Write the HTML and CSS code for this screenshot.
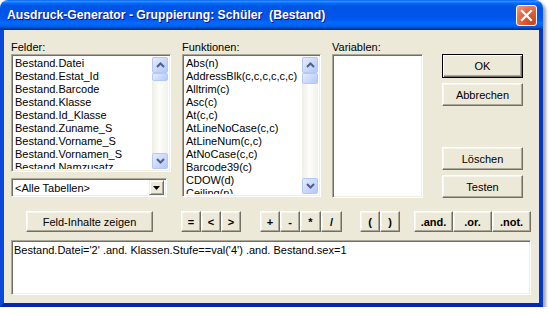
FILE: index.html
```html
<!DOCTYPE HTML>
<html>
<head>
  <title>Ausdruck-Generator</title>
  <meta charset="UTF-8">
  <link rel="stylesheet" href="styles.css">
</head>
<body>
  <div class="window">
    <div class="titlebar">
      <span class="title">Ausdruck-Generator - Gruppierung: Schüler&nbsp; (Bestand)</span>
      <span class="close">
        <svg width="13" height="13" viewBox="0 0 13 13"><path d="M2 2 L11 11 M11 2 L2 11" stroke="#fff" stroke-width="2.2" stroke-linecap="square"/></svg>
      </span>
    </div>

    <div class="client">
      <div class="top">
        <div class="col col-felder">
          <div class="label">Felder:</div>
          <div class="listbox sunken felder-list">
            <ul class="items">
              <li>Bestand.Datei</li>
              <li>Bestand.Estat_Id</li>
              <li>Bestand.Barcode</li>
              <li>Bestand.Klasse</li>
              <li>Bestand.Id_Klasse</li>
              <li>Bestand.Zuname_S</li>
              <li>Bestand.Vorname_S</li>
              <li>Bestand.Vornamen_S</li>
              <li>Bestand.Namzusatz</li>
            </ul>
            <div class="vscroll">
              <span class="sb-btn"><svg width="9" height="6" viewBox="0 0 9 6"><path d="M1 5 L4.5 1.5 L8 5" fill="none" stroke="#4d6185" stroke-width="2"/></svg></span>
              <span class="sb-thumb thumb-small"></span>
              <span class="sb-btn sb-down"><svg width="9" height="6" viewBox="0 0 9 6"><path d="M1 1 L4.5 4.5 L8 1" fill="none" stroke="#4d6185" stroke-width="2"/></svg></span>
            </div>
          </div>
          <div class="combo sunken">
            <span class="combo-text">&lt;Alle Tabellen&gt;</span>
            <span class="combo-btn"><svg width="7" height="4" viewBox="0 0 7 4"><path d="M0 0 H7 L3.5 4 Z" fill="#000"/></svg></span>
          </div>
        </div>

        <div class="col col-funk">
          <div class="label">Funktionen:</div>
          <div class="listbox sunken funk-list">
            <ul class="items">
              <li>Abs(n)</li>
              <li>AddressBlk(c,c,c,c,c,c)</li>
              <li>Alltrim(c)</li>
              <li>Asc(c)</li>
              <li>At(c,c)</li>
              <li>AtLineNoCase(c,c)</li>
              <li>AtLineNum(c,c)</li>
              <li>AtNoCase(c,c)</li>
              <li>Barcode39(c)</li>
              <li>CDOW(d)</li>
              <li>Ceiling(n)</li>
            </ul>
            <div class="vscroll">
              <span class="sb-btn"><svg width="9" height="6" viewBox="0 0 9 6"><path d="M1 5 L4.5 1.5 L8 5" fill="none" stroke="#4d6185" stroke-width="2"/></svg></span>
              <span class="sb-thumb thumb-mid"></span>
              <span class="sb-btn sb-down"><svg width="9" height="6" viewBox="0 0 9 6"><path d="M1 1 L4.5 4.5 L8 1" fill="none" stroke="#4d6185" stroke-width="2"/></svg></span>
            </div>
          </div>
        </div>

        <div class="col col-var">
          <div class="label">Variablen:</div>
          <div class="listbox sunken var-list"></div>
        </div>

        <div class="col col-buttons">
          <button class="btn btn-default">OK</button>
          <button class="btn">Abbrechen</button>
          <button class="btn btn-push">Löschen</button>
          <button class="btn">Testen</button>
        </div>
      </div>

      <div class="ops">
        <button class="btn btn-feld">Feld-Inhalte zeigen</button>
        <div class="group g-cmp">
          <button class="btn op">=</button><button class="btn op">&lt;</button><button class="btn op">&gt;</button>
        </div>
        <div class="group g-math">
          <button class="btn op">+</button><button class="btn op">-</button><button class="btn op w21">*</button><button class="btn op w21">/</button>
        </div>
        <div class="group g-par">
          <button class="btn op">(</button><button class="btn op">)</button>
        </div>
        <div class="group g-log">
          <button class="btn op wide">.and.</button><button class="btn op wide">.or.</button><button class="btn op wide">.not.</button>
        </div>
      </div>

      <div class="expr sunken">Bestand.Datei='2' .and. Klassen.Stufe==val('4') .and. Bestand.sex=1</div>
    </div>
  </div>
</body>
</html>
```

FILE: styles.css
```css
* {
  box-sizing: border-box;
}

html,
body{
  margin: 0;
  background: #fff;
}

body{
  font-family: "Liberation Sans", Arial, sans-serif;
  font-size: 11px;
  color: #000;
}

/* window frame */

.window{
  width: 543px;
  height: 307px;
  border-radius: 8px 8px 0 0;
  box-shadow: 3px 3px 3px rgba(0, 0, 0, 0.35);
}

.titlebar{
  height: 30px;
  display: flex;
  align-items: center;
  padding: 0 6px 0 7px;
  border-radius: 8px 8px 0 0;
  background: linear-gradient(to bottom,
    #0058ee 0%, #3593ff 4%, #288eff 6%, #127dff 8%, #036ffc 10%,
    #0262ee 14%, #0057e5 20%, #0054e3 24%, #0055eb 56%, #005bf5 66%,
    #026afe 76%, #0062ef 86%, #0052d6 92%, #0040ab 94%, #003092 100%);
}

.title{
  flex: 1;
  color: #fff;
  font-weight: bold;
  font-size: 12.2px;
  text-shadow: 1px 1px #0f1089;
  white-space: nowrap;
}

.close{
  width: 21px;
  height: 21px;
  margin-top: 1px;
  display: flex;
  align-items: center;
  justify-content: center;
  border: 1px solid #fff;
  border-radius: 3px;
  background: radial-gradient(circle at 80% 85%, #cc4622 0%, #e15b32 45%, #f39c83 100%);
}

.client{
  height: 277px;
  display: flex;
  flex-direction: column;
  padding: 8px 8px 0 7px;
  background: #ece9d8;
  border: 4px solid #0a48dc;
  border-top: 0;
  border-right-color: #0636c8;
  border-bottom-color: #0626b0;
}

/* 3d edges */

.sunken{
  background: #fff;
  border: 1px solid;
  border-color: #aca899 #fff #fff #aca899;
  box-shadow: inset 1px 1px #716f64, inset -1px -1px #f1efe2;
}

.btn{
  margin: 0;
  padding: 0;
  font: inherit;
  color: #000;
  background: #ece9d8;
  border: 1px solid;
  border-color: #fff #716f64 #716f64 #fff;
  box-shadow: inset -1px -1px #aca899, inset 1px 1px #f6f5ef;
}

.btn-default{
  border: 1px solid #000;
  box-shadow: inset 1px 1px #fff, inset -1px -1px #716f64, inset -2px -2px #aca899;
}

/* top area */

.top{
  display: flex;
  height: 160px;
}

.col{
  display: flex;
  flex-direction: column;
}

.label{
  height: 14px;
  line-height: 14px;
  margin-top: 2px;
}

.col-felder{
  width: 160px;
  margin-right: 11px;
}

.col-funk{
  width: 139px;
  margin-right: 11px;
}

.col-var{
  width: 91px;
  margin-right: 19px;
}

.col-buttons{
  width: 81px;
  padding-top: 16px;
}

.listbox{
  display: flex;
  padding: 2px;
  overflow: hidden;
}

.felder-list{
  height: 118px;
}

.funk-list{
  height: 143px;
}

.var-list{
  height: 144px;
}

.items{
  flex: 1;
  margin: 0;
  padding: 0 0 0 1px;
  list-style: none;
  overflow: hidden;
}

.items li{
  height: 13px;
  line-height: 13px;
  white-space: nowrap;
}

/* xp scrollbar */

.vscroll{
  width: 16px;
  display: flex;
  flex-direction: column;
  background: linear-gradient(to right, #eeede5, #fdfdfa 45%, #f2f1ea);
}

.sb-btn,
.sb-thumb{
  display: flex;
  align-items: center;
  justify-content: center;
  border: 1px solid #b4c8f6;
  border-radius: 2px;
  background: linear-gradient(135deg, #e4ecfe 0%, #c6d6fc 60%, #b3c8f8 100%);
}

.sb-btn{
  height: 16px;
}

.sb-down{
  margin-top: auto;
}

.thumb-small{
  height: 8px;
}

.thumb-mid{
  height: 11px;
}

/* combo */

.combo{
  width: 156px;
  height: 19px;
  margin-top: 6px;
  display: flex;
  align-items: center;
  padding: 2px;
}

.combo-text{
  flex: 1;
  padding-left: 1px;
  white-space: nowrap;
}

.combo-btn{
  width: 15px;
  height: 15px;
  display: flex;
  align-items: center;
  justify-content: center;
  background: #ece9d8;
  border: 1px solid;
  border-color: #f1efe2 #716f64 #716f64 #f1efe2;
  box-shadow: inset 1px 1px #fff, inset -1px -1px #aca899;
}

/* right buttons */

.col-buttons .btn{
  height: 23px;
  margin-bottom: 6px;
}

.col-buttons .btn-default{
  height: 24px;
  margin-bottom: 5px;
}

.col-buttons .btn-push{
  margin-top: auto;
  margin-bottom: 5px;
}

.col-buttons .btn:last-child{
  margin-bottom: 0;
}

/* operator row */

.ops{
  display: flex;
  height: 21px;
  margin-top: 13px;
}

.btn-feld{
  width: 127px;
  margin-left: 15px;
}

.group{
  display: flex;
}

.op{
  width: 20px;
  font-weight: bold;
}

.op.w21{
  width: 21px;
}

.op.wide{
  width: 39px;
}

.g-cmp{
  margin-left: 28px;
}

.g-math{
  margin-left: 19px;
}

.g-par{
  margin-left: 18px;
}

.g-log{
  margin-left: 14px;
}

.expr{
  width: 520px;
  height: 55px;
  margin-top: 8px;
  padding: 3px 2px;
  line-height: 13px;
  white-space: nowrap;
}
```
